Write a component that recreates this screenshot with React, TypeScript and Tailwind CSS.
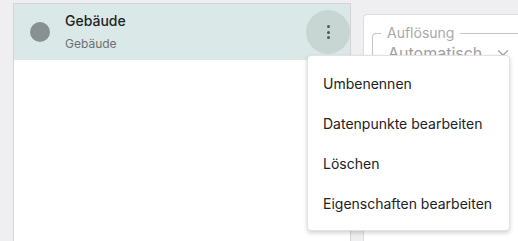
import { ChevronDown } from "lucide-react";

const menuItems = [
  "Umbenennen",
  "Datenpunkte bearbeiten",
  "Löschen",
  "Eigenschaften bearbeiten",
];

export default function App() {
  return (
    <div
      className="relative flex h-[241px] w-[518px] overflow-hidden bg-[#efeff1]"
      style={{ fontFamily: "Inter, 'Noto Sans', sans-serif" }}
    >
      {/* left rail */}
      <div className="w-[13px] shrink-0 bg-[#efeff1]" />

      {/* list panel */}
      <div className="mt-[3px] w-[338px] shrink-0 border-l border-t border-r border-[#d4d4d6] bg-white">
        <div className="flex h-[56px] items-center bg-[#dae8e7] pl-[16px]">
          <span className="h-[20px] w-[20px] shrink-0 rounded-full bg-[#879191]" />
          <div className="ml-[15px] flex flex-1 flex-col">
            <span className="text-[14px] font-medium leading-[18px] text-[#1d2424]">
              Gebäude
            </span>
            <span className="mt-[6px] text-[12px] leading-[16px] text-[#6d7070]">
              Gebäude
            </span>
          </div>
          <button className="flex h-[44px] w-[44px] shrink-0 flex-col items-center justify-center gap-[2.5px] rounded-full bg-[#c7d5d3]">
            <span className="h-[3px] w-[3px] rounded-full bg-[#555]" />
            <span className="h-[3px] w-[3px] rounded-full bg-[#555]" />
            <span className="h-[3px] w-[3px] rounded-full bg-[#555]" />
          </button>
        </div>
      </div>

      {/* settings card */}
      <div className="ml-[12px] mt-[14px] flex-1 rounded-tl-[5px] border-l border-t border-[#dcdcde] bg-white pl-[8px] pt-[11px]">
        <div className="relative mt-[7px] h-[40px] rounded-tl-[4px] border-l border-t border-[#c4c4c4] pl-[15px]">
          <span className="absolute -top-[10px] left-[8px] bg-white px-[6px] text-[14px] leading-[18px] text-[#a9a9a9]">
            Auflösung
          </span>
          <div className="flex items-center whitespace-nowrap pt-[8px] text-[16px] leading-[22px] text-[#a0a0a0]">
            <span>Automatisch</span>
            <ChevronDown className="ml-[12px] h-[18px] w-[18px]" strokeWidth={1.5} />
          </div>
        </div>
      </div>

      {/* context menu */}
      <div className="absolute left-[307px] top-[55px] w-[203px] rounded-[4px] border border-[#e2e2e2] bg-white py-[7px] shadow-[0_2px_4px_rgba(0,0,0,0.18)]">
        {menuItems.map((item) => (
          <div
            key={item}
            className="flex h-[40px] items-center whitespace-nowrap px-[15px] text-[14px] text-[#222]"
          >
            {item}
          </div>
        ))}
      </div>
    </div>
  );
}
